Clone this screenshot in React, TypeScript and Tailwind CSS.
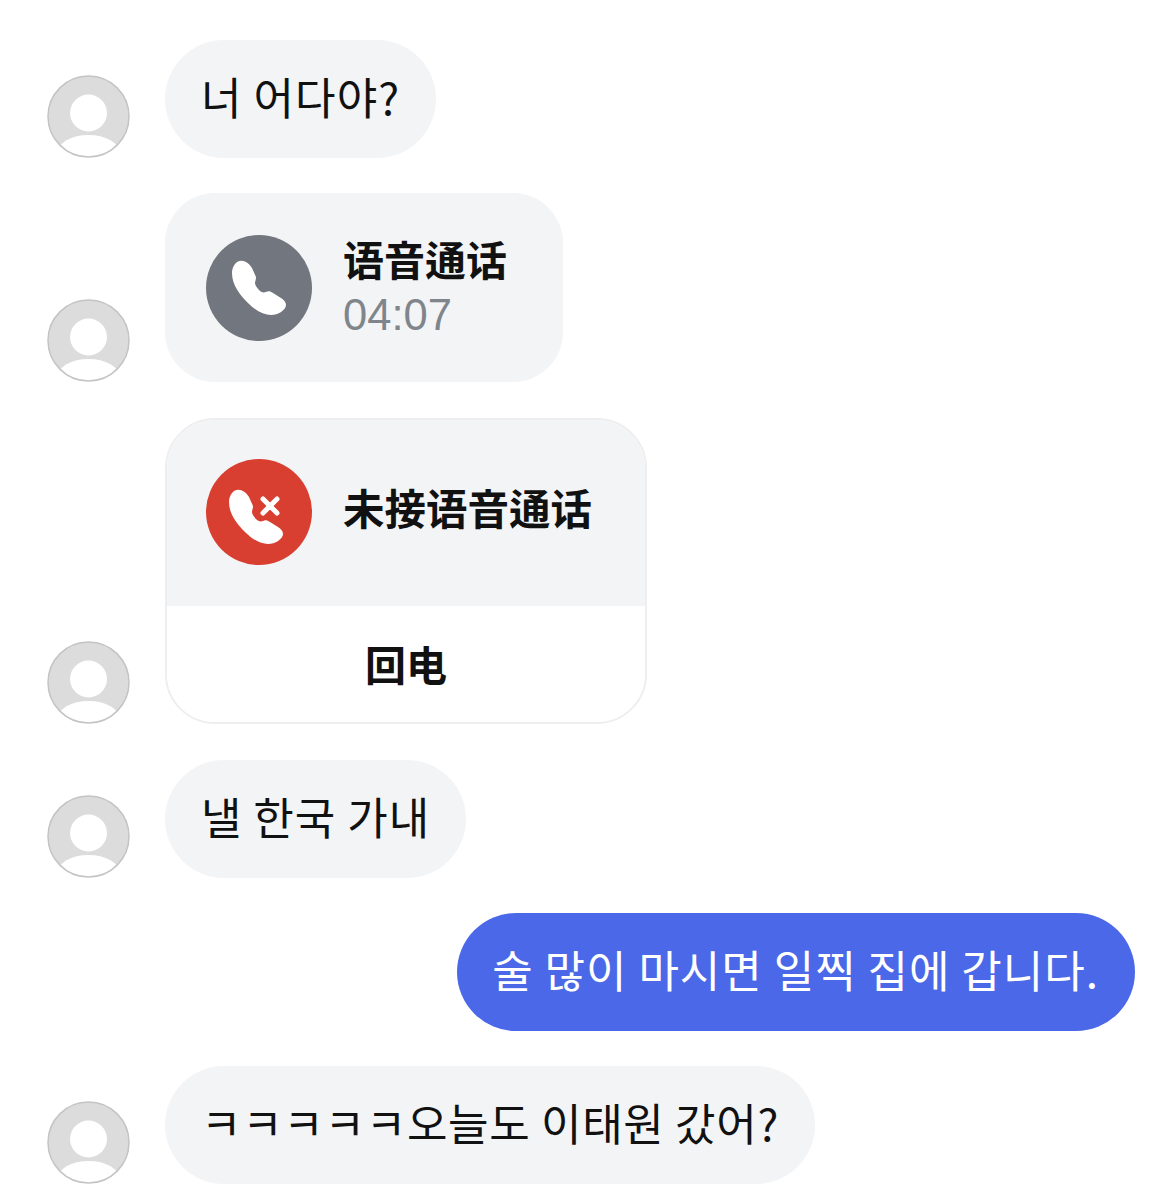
const cjk = "font-['Noto_Sans_CJK_KR','Noto_Sans_CJK_SC',sans-serif]"

function Avatar() {
  return (
    <svg viewBox="0 0 83 83" className="w-[83px] h-[83px] shrink-0">
      <defs>
        <clipPath id="avatar-clip">
          <circle cx="41.5" cy="41.5" r="40.5" />
        </clipPath>
      </defs>
      <circle cx="41.5" cy="41.5" r="40.5" fill="#dcdcdc" />
      <g clipPath="url(#avatar-clip)">
        <circle cx="41.5" cy="38" r="18.5" fill="#fff" />
        <ellipse cx="41.5" cy="78" rx="31" ry="18" fill="#fff" />
      </g>
      <circle cx="41.5" cy="41.5" r="40.5" fill="none" stroke="#c4c4c4" strokeWidth="1.5" />
    </svg>
  )
}

const phonePath =
  "M34 26C30 26 26 32 26 38C26 50 34 60 42 68C50 76 58 80 65 80C72 80 80 75 80 70C80 67 78 65 75 63L67 58C64 56 62 56 60 57C57 58 55 57 53 55C51 53 49 50 49 48C49 46 50 45 50 42L46 33C43 28 38 25 34 26Z"

function CallIcon({ missed }: { missed?: boolean }) {
  return (
    <div
      className={`w-[106px] h-[106px] rounded-full shrink-0 ${
        missed ? "bg-[#d83f31] -mt-[2px]" : "bg-[#72767f]"
      }`}
    >
      <svg viewBox="0 0 106 106" className="w-[106px] h-[106px]">
        <path d={phonePath} fill="#fff" transform={missed ? "translate(-3 5)" : undefined} />
        {missed && (
          <path d="M57 40L71 54M71 40L57 54" stroke="#fff" strokeWidth="5" strokeLinecap="round" fill="none" />
        )}
      </svg>
    </div>
  )
}

function Row({ children, className }: { children: React.ReactNode; className?: string }) {
  return (
    <div className={`flex items-end gap-[35px] ${className ?? ""}`}>
      <Avatar />
      {children}
    </div>
  )
}

function TextBubble({ text, tracking }: { text: string; tracking: string }) {
  return (
    <div className={`h-[118px] px-[36px] pb-[6px] rounded-[59px] bg-[#f3f4f6] flex items-center text-[44px] text-[#111] whitespace-nowrap ${tracking}`}>
      {text}
    </div>
  )
}

export default function App() {
  return (
    <div className={`w-[1159px] h-[1200px] bg-white overflow-hidden pt-[40px] pl-[47px] flex flex-col ${cjk}`}>
      <Row>
        <TextBubble text="너 어다야?" tracking="tracking-[1.1px]" />
      </Row>

      <Row className="mt-[35px]">
        <div className="w-[398px] h-[189px] rounded-[50px] bg-[#f3f4f6] flex items-center pl-[41px] gap-[31px]">
          <CallIcon />
          <div className="flex flex-col">
            <span className="text-[41px] leading-[54px] font-bold text-[#111] -mt-[3px]">语音通话</span>
            <span className="text-[43.5px] leading-[54px] text-[#80858c] font-['Liberation_Sans',sans-serif] mt-[3px]">04:07</span>
          </div>
        </div>
      </Row>

      <Row className="mt-[36px]">
        <div className="w-[482px] h-[306px] rounded-[50px] border-2 border-[#eeeef0] overflow-hidden flex flex-col">
          <div className="h-[186px] bg-[#f3f4f6] flex items-center pl-[39px] gap-[31px]">
            <CallIcon missed />
            <span className="text-[41.5px] font-bold text-[#111] -mt-[12px]">未接语音通话</span>
          </div>
          <div className="flex-1 bg-white flex items-center justify-center text-[41px] font-bold text-[#111]">
            回电
          </div>
        </div>
      </Row>

      <Row className="mt-[36px]">
        <TextBubble text="낼 한국 가내" tracking="tracking-[1px]" />
      </Row>

      <div className="flex justify-end pr-[24px] mt-[35px]">
        <div className="h-[118px] pl-[35px] pr-[36px] pb-[6px] rounded-[59px] bg-[#4a68e8] flex items-center text-[44px] tracking-[1px] text-white whitespace-nowrap">
          술 많이 마시면 일찍 집에 갑니다.
        </div>
      </div>

      <Row className="mt-[35px]">
        <TextBubble text="ㅋㅋㅋㅋㅋ오늘도 이태원 갔어?" tracking="tracking-[0.7px]" />
      </Row>
    </div>
  )
}
